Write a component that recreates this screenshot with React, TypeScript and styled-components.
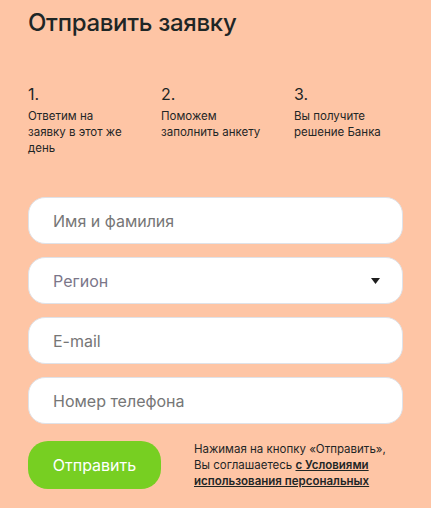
import React from "react";
import styled, { createGlobalStyle } from "styled-components";

const Global = createGlobalStyle`
  html, body { margin: 0; padding: 0; background: #fec5a5; }
  body { font-family: Inter, "Noto Sans", sans-serif; -webkit-font-smoothing: antialiased; }
  * { box-sizing: border-box; }
`;

const Page = styled.div`
  width: 431px;
  height: 508px;
  background: #fec5a5;
  padding: 8px 28px 0 28px;
  color: #1e2626;
  overflow: hidden;
`;

const Title = styled.h2`
  margin: 0;
  font-size: 24px;
  line-height: 30px;
  font-weight: 500;
  letter-spacing: -0.3px;
  color: #1e2626;
`;

const Steps = styled.div`
  display: grid;
  grid-template-columns: repeat(3, 133px);
  margin-top: 46px;
`;

const Step = styled.div`
  display: flex;
  flex-direction: column;
`;

const StepNum = styled.div`
  font-size: 16px;
  line-height: 20px;
  font-weight: 400;
`;

const StepText = styled.div`
  margin-top: 4px;
  font-size: 11.5px;
  line-height: 16px;
  max-width: 105px;
`;

const Form = styled.form`
  display: flex;
  flex-direction: column;
  gap: 13px;
  margin-top: 41px;
  width: 375px;
`;

const Field = styled.div`
  position: relative;
  height: 47px;
  border-radius: 17px;
  background: #fff;
  border: 1px solid #dfe2e8;
  display: flex;
  align-items: center;
  padding: 0 24px;
`;

const Placeholder = styled.span<{ $tone?: string }>`
  font-size: 16px;
  color: ${(p) => p.$tone || "#767676"};
  flex: 1;
`;

const Caret = styled.svg`
  width: 9px;
  height: 6px;
  margin-right: -2px;
`;

const Bottom = styled.div`
  display: flex;
  align-items: center;
  gap: 33px;
  margin-top: 4px;
`;

const Button = styled.button`
  flex: 0 0 133px;
  width: 133px;
  height: 48px;
  border: 0;
  border-radius: 20px;
  background: #77cf22;
  color: #fff;
  font-family: inherit;
  font-size: 16px;
  font-weight: 400;
  cursor: pointer;
`;

const Note = styled.p`
  margin: 0;
  font-size: 11.5px;
  line-height: 16px;
  color: #1e2626;
  a {
    color: #1e2626;
    font-weight: 600;
    text-decoration: underline;
  }
`;

const steps = [
  { n: "1.", t: "Ответим на заявку в этот же день" },
  { n: "2.", t: "Поможем заполнить анкету" },
  { n: "3.", t: "Вы получите решение Банка" },
];

export default function App() {
  return (
    <Page>
      <Global />
      <Title>Отправить заявку</Title>
      <Steps>
        {steps.map((s) => (
          <Step key={s.n}>
            <StepNum>{s.n}</StepNum>
            <StepText>{s.t}</StepText>
          </Step>
        ))}
      </Steps>
      <Form onSubmit={(e) => e.preventDefault()}>
        <Field>
          <Placeholder>Имя и фамилия</Placeholder>
        </Field>
        <Field>
          <Placeholder $tone="#7b7689">Регион</Placeholder>
          <Caret viewBox="0 0 9 6">
            <path d="M0 0H9L4.5 6Z" fill="#1e1e1e" />
          </Caret>
        </Field>
        <Field>
          <Placeholder>E-mail</Placeholder>
        </Field>
        <Field>
          <Placeholder>Номер телефона</Placeholder>
        </Field>
        <Bottom>
          <Button type="submit">Отправить</Button>
          <Note>
            Нажимая на кнопку «Отправить»,
            <br />
            Вы соглашаетесь <a href="#">с Условиями использования персональных</a>
          </Note>
        </Bottom>
      </Form>
    </Page>
  );
}
